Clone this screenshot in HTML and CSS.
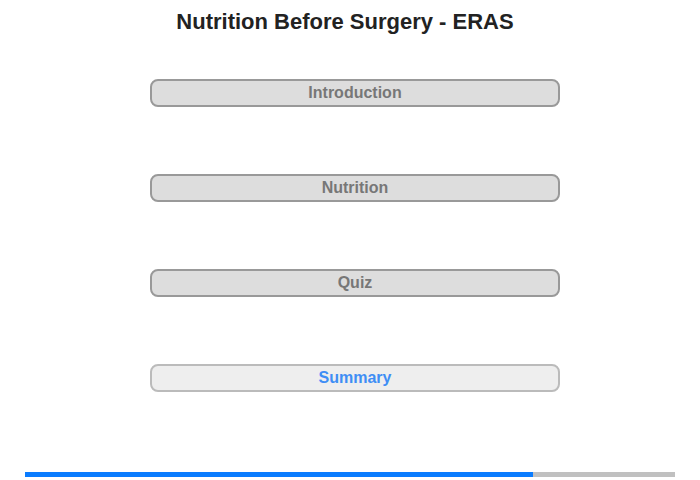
FILE: index.html
```html
<!DOCTYPE html>
<html>

<head>
	<meta charset="utf-8" />
	<title>Nutrition Before Surgery - ERAS</title>
	<meta name="viewport" content="width=device-width, initial-scale=1" />
	<link rel="stylesheet" href="styles.css">
</head>

<body>
	<main class="page">
		<h1 class="title">Nutrition Before Surgery - ERAS</h1>
		<nav class="menu">
			<a class="menu-item" href="#">Introduction</a>
			<a class="menu-item" href="#">Nutrition</a>
			<a class="menu-item" href="#">Quiz</a>
			<a class="menu-item is-current" href="#">Summary</a>
		</nav>
		<div class="progress">
			<div class="progress-fill" style="width: 78.2%"></div>
		</div>
	</main>
</body>

</html>
```

FILE: styles.css
```css
* {
	box-sizing: border-box;
}

body {
	margin: 0;
	background: #ffffff;
	font-family: "Liberation Sans", Arial, sans-serif;
}

.page {
	height: 480px;
	display: flex;
	flex-direction: column;
}

.title {
	margin: 0;
	padding: 9px 10px 0 0;
	font-size: 22px;
	line-height: 26px;
	font-weight: bold;
	text-align: center;
	color: #222222;
}

.menu {
	display: flex;
	flex-direction: column;
	gap: 67px;
	padding: 44px 0 0 150px;
}

.menu-item {
	display: block;
	width: 410px;
	height: 28px;
	line-height: 24px;
	border: 2px solid #999999;
	border-radius: 8px;
	background-color: #dddddd;
	color: #777777;
	font-size: 16px;
	font-weight: bold;
	text-align: center;
	text-decoration: none;
}

.menu-item.is-current {
	border-color: #bbbbbb;
	background-color: #eeeeee;
	color: #3f8ef5;
}

.progress {
	margin: auto 25px 3px 25px;
	height: 5px;
	background-color: #c0c0c0;
}

.progress-fill {
	height: 100%;
	background-color: #0a7cff;
}
```
